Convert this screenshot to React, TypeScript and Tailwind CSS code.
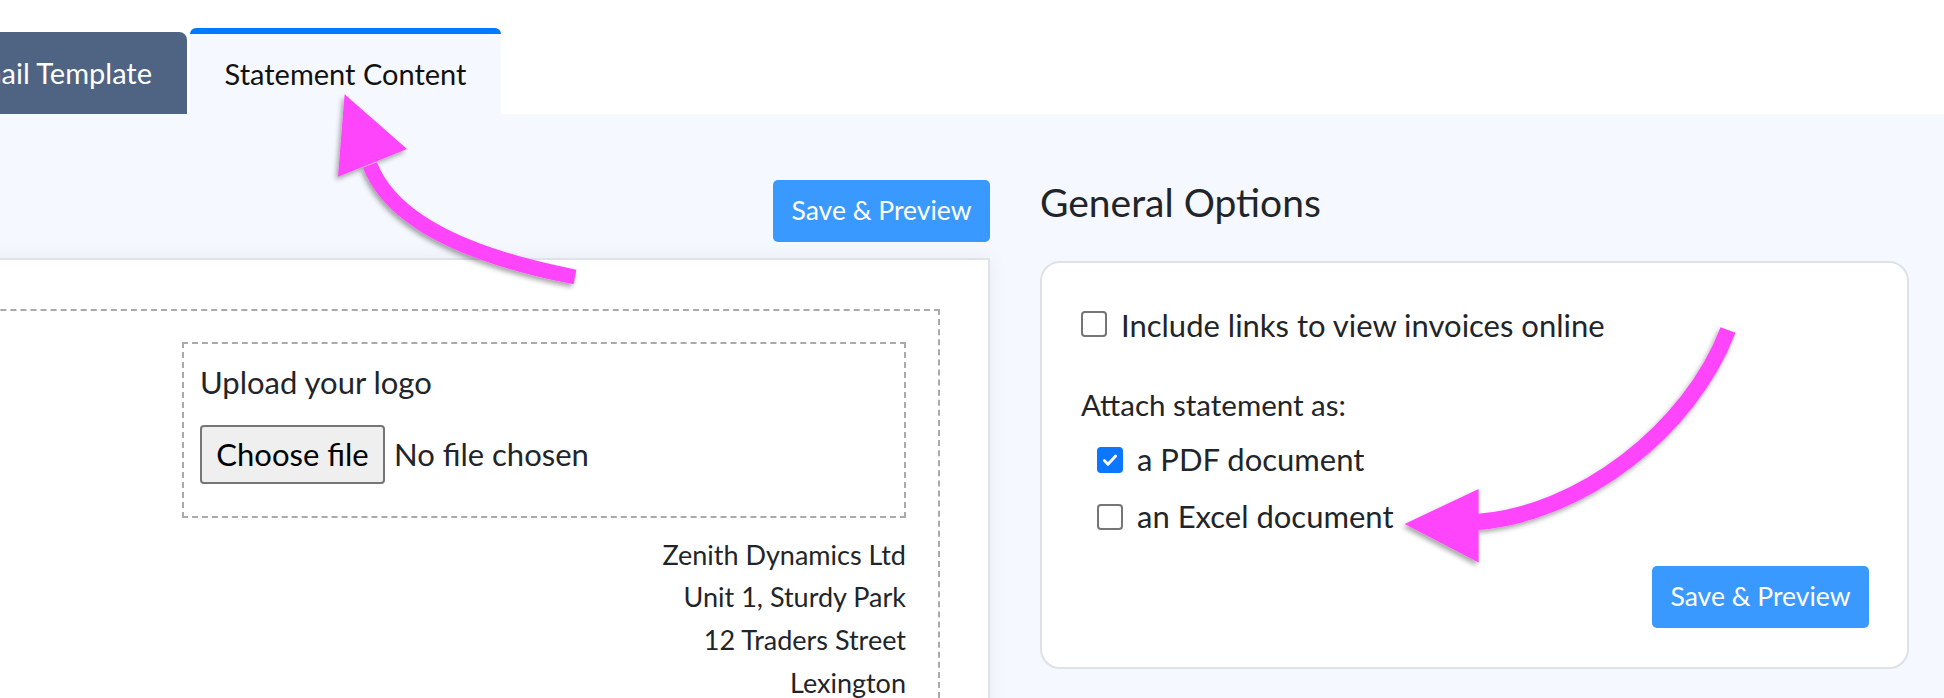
import React from "react";

function Checkbox({ checked }: { checked?: boolean }) {
  if (checked) {
    return (
      <span className="flex h-[26px] w-[26px] shrink-0 items-center justify-center rounded-[4px] bg-[#0b76ff]">
        <svg width="18" height="18" viewBox="0 0 16 16" fill="none">
          <path d="M3 8.5l3.2 3.2L13 4.5" stroke="white" strokeWidth="2.6" strokeLinecap="round" strokeLinejoin="round" />
        </svg>
      </span>
    );
  }
  return <span className="block h-[26px] w-[26px] shrink-0 rounded-[4px] border-2 border-[#767676] bg-white" />;
}

function SaveButton() {
  return (
    <div className="flex h-[62px] w-[217px] items-center justify-center rounded-[5px] bg-[#3a99ff] text-[26.5px] text-white">
      Save &amp; Preview
    </div>
  );
}

export default function App() {
  return (
    <div className="relative h-[698px] w-[1944px] overflow-hidden bg-white font-['Lato',sans-serif] text-[#212529]">
      {/* Tabs */}
      <div className="flex h-[114px] items-end gap-[3px]">
        <div className="flex h-[82px] w-[187px] items-center justify-end overflow-hidden whitespace-nowrap rounded-tr-[8px] bg-[#4f6383] pr-[35px] text-[29px] text-white">
          Email Template
        </div>
        <div className="flex h-[86px] w-[311px] items-center justify-center rounded-t-[6px] border-t-[6px] border-[#007bff] bg-[#f5f8fe] text-[29px] text-[#111]">
          Statement Content
        </div>
      </div>

      {/* Content */}
      <div className="flex h-[584px] bg-[#f5f8fe]">
        {/* Left column */}
        <div className="flex w-[990px] shrink-0 flex-col">
          <div className="mt-[66px] flex justify-end">
            <SaveButton />
          </div>
          <div className="ml-[-100px] mt-[16px] flex-1 border-r-2 border-t-2 border-[#dfe3e8] bg-white pr-[48px] pt-[49px] shadow-[0_0_18px_rgba(0,0,0,0.06)]">
            <div className="h-[500px] border-2 border-dashed border-[#aaaaaa] pr-[32px] pt-[31px]">
              <div className="ml-auto w-[724px] border-2 border-dashed border-[#aaaaaa] pb-[32px] pl-[16px] pt-[17px]">
                <div className="text-[31px] leading-[42.7px]">Upload your logo</div>
                <div className="mt-[21px] flex items-center">
                  <span className="flex h-[59px] w-[185px] items-center justify-center rounded-[4px] border-2 border-[#767676] bg-[#efefef] text-[31px] text-black">
                    Choose file
                  </span>
                  <span className="ml-[9px] text-[31px]">No file chosen</span>
                </div>
              </div>
              <div className="mt-[16px] text-right text-[27px] leading-[42.7px]">
                <div>Zenith Dynamics Ltd</div>
                <div>Unit 1, Sturdy Park</div>
                <div>12 Traders Street</div>
                <div>Lexington</div>
              </div>
            </div>
          </div>
        </div>

        {/* Right column */}
        <div className="ml-[50px] w-[869px] shrink-0">
          <div className="mt-[64px] text-[39px] leading-[48px]">General Options</div>
          <div className="mt-[35px] rounded-[20px] border-2 border-[#dee2e6] bg-white pb-[39px] pl-[39px] pr-[38px] pt-[41px] text-[31px] leading-[42.7px]">
            <div className="flex items-start gap-[14px]">
              <span className="mt-[7px]">
                <Checkbox />
              </span>
              <span>Include links to view invoices online</span>
            </div>
            <div className="mt-[37px] text-[29.5px]">Attach statement as:</div>
            <div className="mt-[12px] flex items-start gap-[14px] pl-[16px]">
              <span className="mt-[9px]">
                <Checkbox checked />
              </span>
              <span>a PDF document</span>
            </div>
            <div className="mt-[14px] flex items-start gap-[14px] pl-[16px]">
              <span className="mt-[9px]">
                <Checkbox />
              </span>
              <span>an Excel document</span>
            </div>
            <div className="mt-[28px] flex justify-end">
              <SaveButton />
            </div>
          </div>
        </div>
      </div>

      {/* Annotation arrows */}
      <svg className="pointer-events-none absolute left-0 top-0" width="1944" height="698" viewBox="0 0 1944 698">
        <defs>
          <filter id="sh" x="-20%" y="-20%" width="140%" height="140%">
            <feDropShadow dx="-2" dy="3" stdDeviation="2.5" floodColor="#000" floodOpacity="0.35" />
          </filter>
        </defs>
        <g filter="url(#sh)" fill="#ff44fb" stroke="none">
          <path d="M575,277 Q400,243 370,165" fill="none" stroke="#ff44fb" strokeWidth="15" />
          <polygon points="344.6,94.3 338,176.7 407,149" />
          <path d="M1728,330 C1690,430 1580,515 1476,522" fill="none" stroke="#ff44fb" strokeWidth="16" />
          <polygon points="1404.6,524 1478.6,489 1478.6,562.4" />
        </g>
      </svg>
    </div>
  );
}
